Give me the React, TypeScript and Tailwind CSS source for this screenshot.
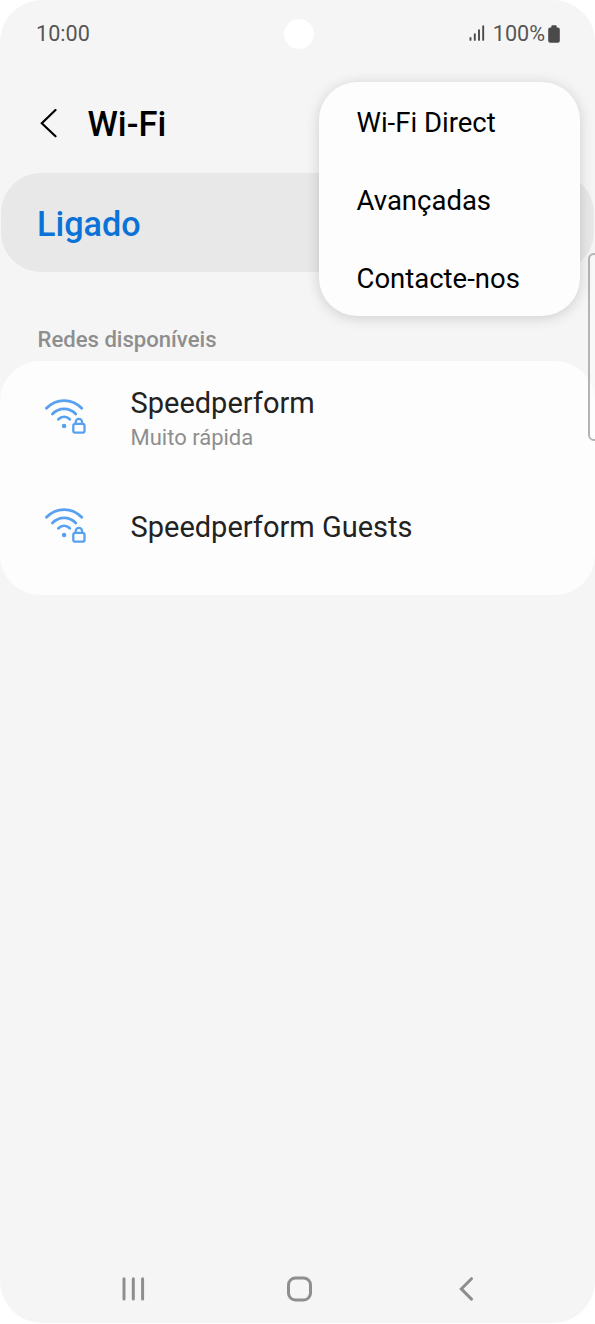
import { type ReactNode } from "react";

interface Network {
  name: string;
  note?: string;
}

const NETWORKS: Network[] = [
  { name: "Speedperform", note: "Muito rápida" },
  { name: "Speedperform Guests" },
];

const MENU_ITEMS = ["Wi-Fi Direct", "Avançadas", "Contacte-nos"];

// ─── Icons ────────────────────────────────────────────────────────────────────

function SecuredWifiIcon() {
  return (
    <svg width="44" height="38" viewBox="0 0 44 38" fill="none" stroke="#58a1f0" strokeWidth="2.8" strokeLinecap="round">
      <path d="M3.400 10.300C13.400 0 28.800 0 38.800 10.300" />
      <path d="M9.400 16C15.900 9.200 26.300 9.200 32.800 16" />
      <path d="M15.400 21.300C18.800 18.100 23.400 18.100 26.800 21.300" />
      <circle cx="21.100" cy="28" r="2.300" fill="#58a1f0" stroke="none" />
      <rect x="30.300" y="25.800" width="11.200" height="8.900" rx="2" strokeWidth="2.300" />
      <path d="M32.700 25.400V23.900a3.200 3.100 0 0 1 6.400 0V25.400" strokeWidth="2.300" />
    </svg>
  );
}

function SignalIcon() {
  return (
    <svg width="16" height="17" viewBox="0 0 16 17" stroke="#4a4a4a" strokeWidth="1.900" strokeLinecap="round">
      <path d="M1.500 13V14.900M5.800 9.100V14.900M10 5.100V14.900M14.200 1.300V14.900" />
    </svg>
  );
}

function BatteryIcon() {
  return (
    <svg width="12" height="18" viewBox="0 0 12 18" fill="#4a4a4a">
      <path d="M4.300 0.300h3.400q1 0 1 1v1.200h1.100q2 0 2 2V15.700q0 2-2 2H2.200q-2 0-2-2V4.500q0-2 2-2h1.100V1.300q0-1 1-1z" />
    </svg>
  );
}

// ─── Sections ─────────────────────────────────────────────────────────────────

function StatusBar() {
  return (
    <div className="relative flex h-[67px] items-center justify-between pl-9 pr-[35px] pt-px text-[21.600px] text-[#555]">
      <span>10:00</span>
      <div className="absolute left-[284px] top-[19px] size-[30px] rounded-full bg-white" />
      <div className="flex items-center">
        <SignalIcon />
        <span className="ml-2 mr-[3px]">100%</span>
        <BatteryIcon />
      </div>
    </div>
  );
}

function NetworkRow({ network }: { network: Network }) {
  return (
    <div className="flex pl-[43px]">
      <div className={network.note ? "pt-[37px]" : "pt-[22px]"}>
        <SecuredWifiIcon />
      </div>
      <div className="ml-[43.500px] pt-6">
        <p className="text-[29px] leading-9 text-[#222]">{network.name}</p>
        {network.note && <p className="mt-px text-[22px] leading-8 text-[#8e8e8e]">{network.note}</p>}
      </div>
    </div>
  );
}

function OverflowMenu() {
  return (
    <div className="absolute left-[319px] top-[82px] h-[234px] w-[261px] rounded-[38px] bg-[#fdfdfd] pl-[37.500px] pt-[2px] shadow-[0_2px_14px_rgba(0,0,0,0.16)]">
      {MENU_ITEMS.map((item) => (
        <div key={item} className="flex h-[78px] items-center text-[27.500px] text-black">
          {item}
        </div>
      ))}
    </div>
  );
}

function NavButton({ children }: { children: ReactNode }) {
  return (
    <button className="flex w-[166.500px] items-center justify-center">
      <svg width="28" height="28" viewBox="0 0 28 28" fill="none" stroke="#8e8e8e" strokeWidth="3" strokeLinecap="round">
        {children}
      </svg>
    </button>
  );
}

export default function App() {
  return (
    <div className="h-[1324px] w-[595px] bg-white font-[Roboto,sans-serif]">
      <div className="relative flex h-[1323px] flex-col overflow-hidden rounded-[42px] bg-[#f5f5f5]">
        <StatusBar />

        <header className="flex h-[106px] items-center pl-10 pt-[7px]">
          <svg width="18" height="30" viewBox="0 0 18 30" fill="none" stroke="#000" strokeWidth="2.200" strokeLinecap="round">
            <path d="M15.500 1L1.800 14.200L15.500 27.300" />
          </svg>
          <h1 className="ml-[29.500px] pt-[3px] text-[34.500px] font-medium text-black">Wi-Fi</h1>
        </header>

        <div className="mx-px flex h-[99px] items-center rounded-[40px] bg-[#e8e8e8] pl-9 pt-[5px]">
          <span className="text-[34.200px] font-medium text-[#0b72d8]">Ligado</span>
        </div>

        <h2 className="h-[89px] pl-[37.500px] pt-[51px] text-[22.100px] font-medium leading-8 text-[#8e8e8e]">Redes disponíveis</h2>

        <section className="h-[234px] rounded-[40px] bg-[#fdfdfd]">
          <NetworkRow network={NETWORKS[0]} />
          <div className="h-[31px]" />
          <NetworkRow network={NETWORKS[1]} />
        </section>

        <nav className="mt-auto flex h-[69px] justify-center pl-[5px]">
          <NavButton>
            <path d="M4 3.800V24M13.300 3.800V24M22.600 3.800V24" />
          </NavButton>
          <NavButton>
            <rect x="2.500" y="3" width="22" height="22" rx="7" />
          </NavButton>
          <NavButton>
            <path d="M18.500 3.700L8.300 13.900L18.500 24.100" />
          </NavButton>
        </nav>

        {/* Edge panel handle, cut off by the right side of the screen */}
        <div className="absolute left-[588px] top-[253px] h-[188px] w-5 rounded-[6px] border-2 border-[#b4b4b4] bg-white/30" />

        <OverflowMenu />
      </div>
    </div>
  );
}
